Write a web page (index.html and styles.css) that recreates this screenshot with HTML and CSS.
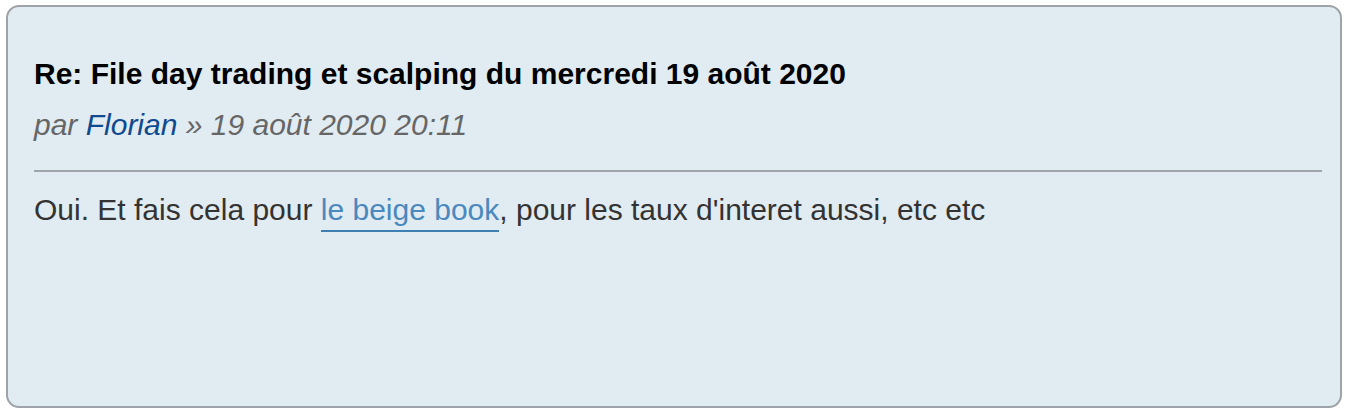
FILE: index.html
```html
<!DOCTYPE html>
<html lang="fr">
<head>
<meta charset="utf-8">
<link rel="stylesheet" href="styles.css">
</head>
<body>
<div class="post">
  <h3 class="post-title">Re: File day trading et scalping du mercredi 19 août 2020</h3>
  <p class="author">par <a class="username" href="#">Florian</a> » 19 août 2020 20:11</p>
  <div class="content">Oui. Et fais cela pour <a class="postlink" href="#">le beige book</a>, pour les taux d'interet aussi, etc etc</div>
</div>
</body>
</html>
```
FILE: styles.css
```css
html, body {
  margin: 0;
  padding: 0;
  background: #ffffff;
}
body {
  padding: 5px 7px 5px 6px;
  font-family: "Liberation Sans", Arial, sans-serif;
}
.post {
  box-sizing: border-box;
  height: 403px;
  background: #e1ebf2;
  border: 2px solid #9ea3a8;
  border-radius: 13px;
  padding: 49px 18px 0 26px;
}
.post-title {
  margin: 0;
  font-size: 30px;
  font-weight: bold;
  line-height: 36px;
  color: #000000;
}
.author {
  margin: 15px 0 0;
  font-size: 30px;
  font-style: italic;
  color: #666666;
  line-height: 36px;
  padding-bottom: 27px;
  border-bottom: 2px solid #a0a5aa;
}
.username {
  color: #0f4a8f;
  text-decoration: none;
}
.content {
  font-size: 30px;
  color: #333333;
  line-height: 36px;
  margin-top: 20px;
}
.postlink {
  color: #4a88bd;
  text-decoration: none;
  border-bottom: 2px solid #3f80b4;
  padding-bottom: 4px;
}
```
